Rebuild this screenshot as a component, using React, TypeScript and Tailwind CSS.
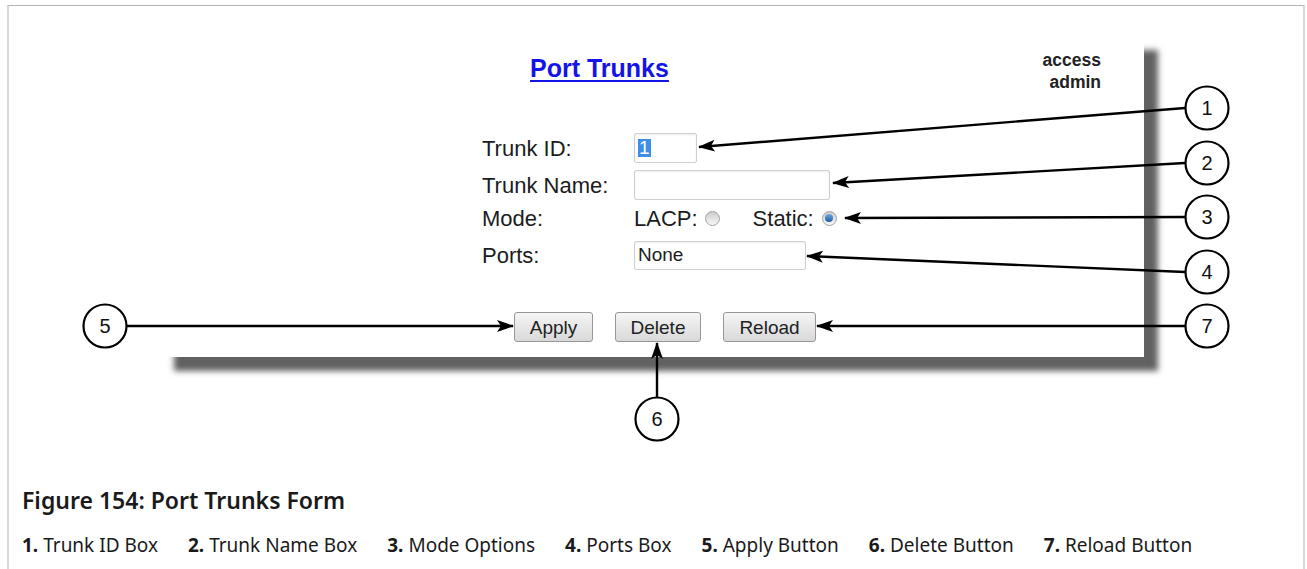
import React from 'react'

const formFont = { fontFamily: '"Liberation Sans", Arial, sans-serif' }
const docFont = { fontFamily: '"Noto Sans", "Open Sans", sans-serif' }

const callouts = [
  { n: '1', cx: 1207, cy: 108 },
  { n: '2', cx: 1207, cy: 163 },
  { n: '3', cx: 1207, cy: 217 },
  { n: '4', cx: 1207, cy: 272 },
  { n: '7', cx: 1207, cy: 326 },
  { n: '5', cx: 105, cy: 326 },
  { n: '6', cx: 657, cy: 419 },
]

const arrows = [
  { x1: 1185, y1: 108, x2: 699, y2: 147 },
  { x1: 1185, y1: 163, x2: 833, y2: 183 },
  { x1: 1185, y1: 217, x2: 845, y2: 218 },
  { x1: 1185, y1: 272, x2: 807, y2: 256 },
  { x1: 1185, y1: 326, x2: 817, y2: 326 },
  { x1: 127, y1: 326, x2: 513, y2: 326 },
  { x1: 657, y1: 397, x2: 657, y2: 343 },
]

const legend = [
  ['1.', 'Trunk ID Box'],
  ['2.', 'Trunk Name Box'],
  ['3.', 'Mode Options'],
  ['4.', 'Ports Box'],
  ['5.', 'Apply Button'],
  ['6.', 'Delete Button'],
  ['7.', 'Reload Button'],
]

function Radio({ checked }: { checked?: boolean }) {
  return (
    <span className="inline-flex w-[15px] h-[15px] rounded-full border border-[#a2a2a2] bg-gradient-to-b from-[#cdcdcd] to-[#f7f7f7] items-center justify-center">
      {checked && <span className="w-[8px] h-[8px] rounded-full bg-gradient-to-b from-[#6ea9e0] to-[#1b5ca3]" />}
    </span>
  )
}

function Btn({ label, w }: { label: string; w: string }) {
  return (
    <button className={`${w} h-[30px] rounded-[3px] border border-[#979797] bg-gradient-to-b from-[#f5f5f5] to-[#d9d9d9] text-[19px] text-[#222] leading-none`}>
      {label}
    </button>
  )
}

function Callouts() {
  return (
    <svg className="absolute left-0 top-0 pointer-events-none" width={1307} height={569}>
      <defs>
        <marker id="head" markerUnits="userSpaceOnUse" markerWidth="18" markerHeight="14" refX="16" refY="6" orient="auto">
          <path d="M0,0 L17,6 L0,12 L4,6 z" fill="#000" />
        </marker>
      </defs>
      {arrows.map((a, i) => (
        <line key={i} x1={a.x1} y1={a.y1} x2={a.x2} y2={a.y2} stroke="#000" strokeWidth={2.4} markerEnd="url(#head)" />
      ))}
      {callouts.map(c => (
        <g key={c.n}>
          <circle cx={c.cx} cy={c.cy} r={21.5} fill="#fff" stroke="#000" strokeWidth={2.2} />
          <text x={c.cx} y={c.cy + 7} textAnchor="middle" fontSize="20" fontFamily='"Liberation Sans", Arial, sans-serif' fill="#111">
            {c.n}
          </text>
        </g>
      ))}
    </svg>
  )
}

export default function App() {
  return (
    <div className="relative w-[1307px] h-[569px] bg-white overflow-hidden">
      <div className="ml-[7px] mt-[5px] w-[1298px] h-[564px] border-t border-t-[#b3b3b3] border-x-2 border-x-[#d9d9d9]">
        {/* screenshot panel */}
        <div
          className="ml-[151px] mt-[30px] w-[984px] h-[321px] bg-white shadow-[14px_14px_6px_rgba(0,0,0,0.62)] text-[#1c1c1c]"
          style={formFont}
        >
          <div className="h-[97px] flex justify-between items-start pl-[370px] pr-[43px]">
            <a className="mt-[18px] text-[25px] leading-[28px] font-bold text-[#1414e8] underline underline-offset-[3px] decoration-2">
              Port Trunks
            </a>
            <div className="mt-[13px] text-[17.5px] leading-[22px] font-bold text-right text-[#222]">
              <div>access</div>
              <div>admin</div>
            </div>
          </div>

          <div className="ml-[322px] text-[22px]">
            <div className="flex items-center h-[30px]">
              <span className="w-[152px]">Trunk ID:</span>
              <span className="w-[63px] h-[30px] border border-[#cfcfcf] rounded-[2px] flex items-center pl-[3px] shadow-[inset_0_1px_2px_rgba(0,0,0,0.08)]">
                <span className="bg-[#3d8ee6] text-white text-[19px] leading-[18px] px-[1px]">1</span>
              </span>
            </div>
            <div className="flex items-center h-[30px] mt-[7px]">
              <span className="w-[152px]">Trunk Name:</span>
              <span className="w-[196px] h-[30px] border border-[#cfcfcf] rounded-[2px] shadow-[inset_0_1px_2px_rgba(0,0,0,0.08)]" />
            </div>
            <div className="flex items-center h-[30px] mt-[3px]">
              <span className="w-[152px]">Mode:</span>
              <span className="flex items-center gap-[7px]">LACP: <Radio /></span>
              <span className="flex items-center gap-[8px] ml-[33px]">Static: <Radio checked /></span>
            </div>
            <div className="flex items-center h-[30px] mt-[7px]">
              <span className="w-[152px]">Ports:</span>
              <span className="w-[172px] h-[29px] border border-[#cfcfcf] rounded-[2px] flex items-center pl-[3px] text-[19px] shadow-[inset_0_1px_2px_rgba(0,0,0,0.08)]">
                None
              </span>
            </div>
          </div>

          <div className="ml-[354px] mt-[42px] flex gap-[22px]">
            <Btn label="Apply" w="w-[79px]" />
            <Btn label="Delete" w="w-[86px]" />
            <Btn label="Reload" w="w-[93px]" />
          </div>
        </div>

        {/* caption */}
        <div className="pl-[13px] mt-[128px] text-[#1a1a1a]" style={docFont}>
          <div className="text-[23px] leading-[30px] font-semibold">Figure 154: Port Trunks Form</div>
          <div className="mt-[17px] flex gap-[30px] text-[19px] leading-[26px]">
            {legend.map(([n, t]) => (
              <span key={n}>
                <span className="font-bold">{n}</span> {t}
              </span>
            ))}
          </div>
        </div>
      </div>
      <Callouts />
    </div>
  )
}
